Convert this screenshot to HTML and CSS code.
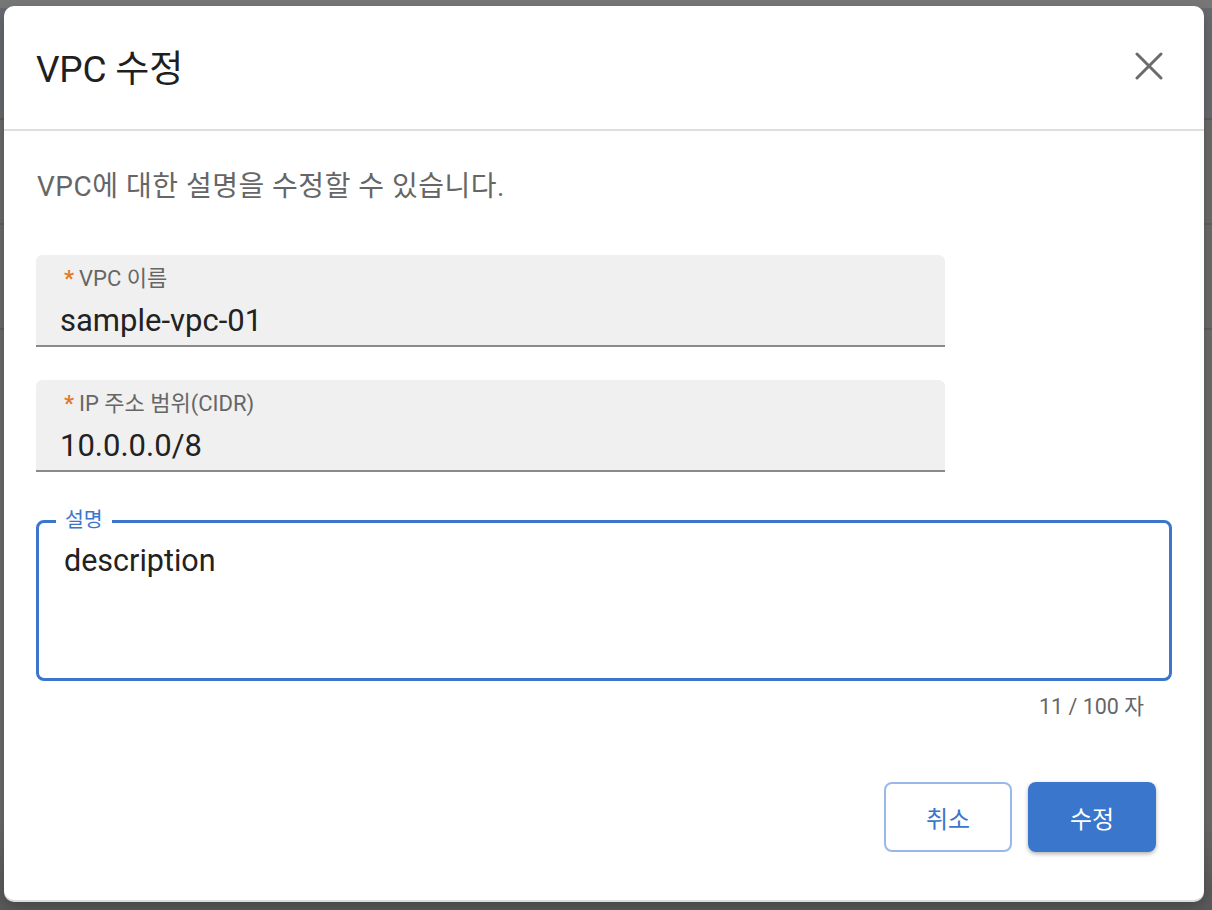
FILE: index.html
```html
<!DOCTYPE html>
<html lang="ko">
<head>
<meta charset="utf-8">
<title>VPC 수정</title>
<link rel="stylesheet" href="styles.css">
</head>
<body>
<div class="backdrop">
  <div class="bg-strip"></div>
  <div class="bg-head"></div>
  <div class="bg-row"></div>
  <div class="bg-row"></div>
  <div class="bg-rest"></div>
</div>

<div class="modal" role="dialog" aria-labelledby="modal-title">
  <header class="modal-header">
    <h1 id="modal-title" class="modal-title">VPC 수정</h1>
    <button class="close-btn" aria-label="닫기">
      <svg width="28" height="28" viewBox="0 0 28 28"><path d="M2 2 L26 26 M26 2 L2 26" stroke="#6b6b6b" stroke-width="3" stroke-linecap="round" fill="none"/></svg>
    </button>
  </header>
  <div class="modal-body">
    <p class="modal-desc">VPC에 대한 설명을 수정할 수 있습니다.</p>

    <div class="filled-field">
      <div class="field-label"><span class="req">*</span>VPC 이름</div>
      <div class="field-value">sample-vpc-01</div>
    </div>

    <div class="filled-field gap-field">
      <div class="field-label"><span class="req">*</span>IP 주소 범위(CIDR)</div>
      <div class="field-value">10.0.0.0/8</div>
    </div>

    <div class="outlined-field">
      <span class="outlined-label">설명</span>
      <div class="outlined-value">description</div>
    </div>
    <div class="counter">11 / 100 자</div>

    <div class="actions">
      <button class="btn btn-outline">취소</button>
      <button class="btn btn-primary">수정</button>
    </div>
  </div>
</div>
</body>
</html>
```

FILE: styles.css
```css
* { box-sizing: border-box; }
html, body {
  margin: 0;
  padding: 0;
  width: 1212px;
  height: 910px;
  overflow: hidden;
}
body {
  background: #6b6b6b;
  font-family: "Roboto", "Noto Sans CJK KR", sans-serif;
  position: relative;
}
.backdrop {
  display: flex;
  flex-direction: column;
  height: 910px;
}
.bg-strip { height: 8px; background: #777777; }
.bg-head { height: 112px; background: #676b70; border-bottom: 2px solid #5e5e5e; }
.bg-row { height: 105px; background: #6b6b6b; border-bottom: 2px solid #5f5f5f; }
.bg-rest { flex: 1; background: linear-gradient(#6b6b6b 85%, #5a5a5a 97%); }

.modal {
  position: absolute;
  left: 4px;
  top: 6px;
  width: 1200px;
  height: 894px;
  background: #fff;
  border-radius: 10px;
  box-shadow: 0 2px 0 #dcdcdc, 0 6px 14px rgba(0,0,0,0.25);
  display: flex;
  flex-direction: column;
}
.modal-header {
  height: 125px;
  border-bottom: 2px solid #dedede;
  display: flex;
  align-items: center;
  justify-content: space-between;
  padding: 0 41px 4px 32px;
}
.modal-title {
  margin: 0;
  font-size: 37px;
  font-weight: 400;
  color: #1f1f1f;
  letter-spacing: -0.2px;
}
.close-btn {
  background: none;
  border: 0;
  padding: 0;
  width: 28px;
  height: 28px;
  display: flex;
  cursor: pointer;
}
.modal-body {
  padding: 0 32px 0 32px;
  display: flex;
  flex-direction: column;
}
.modal-desc {
  margin: 39px 0 0 1px;
  font-size: 28px;
  line-height: 34px;
  letter-spacing: 0.5px;
  color: #666;
}
.filled-field {
  margin-top: 51px;
  width: 909px;
  height: 92px;
  background: #f0f0f0;
  border-radius: 6px 6px 0 0;
  border-bottom: 2px solid #8a8a8a;
  padding: 11px 24px 0 24px;
}
.gap-field { margin-top: 33px; }
.field-label {
  font-size: 22px;
  line-height: 26px;
  color: #666;
  display: flex;
  align-items: center;
}
.req {
  color: #e07a2a;
  font-weight: 700;
  margin: 0 5px 0 4px;
  font-size: 22px;
}
.field-value {
  margin-top: 10px;
  font-size: 31px;
  line-height: 38px;
  color: #222;
}
.outlined-field {
  position: relative;
  margin-top: 48px;
  width: 1136px;
  height: 161px;
  border: 3px solid #3b76cc;
  border-radius: 8px;
  padding: 19px 25px 0 25px;
}
.outlined-label {
  position: absolute;
  left: 17px;
  top: -15px;
  background: #fff;
  padding: 0 9px;
  font-size: 20.5px;
  line-height: 24px;
  color: #3b76cc;
}
.outlined-value {
  font-size: 30.5px;
  line-height: 38px;
  color: #222;
}
.counter {
  width: 1136px;
  text-align: right;
  padding-right: 28px;
  margin-top: 13px;
  font-size: 21.5px;
  line-height: 26px;
  color: #666;
}
.actions {
  display: flex;
  justify-content: flex-end;
  gap: 16px;
  margin-top: 62px;
  padding-right: 16px;
}
.btn {
  width: 128px;
  height: 70px;
  border-radius: 8px;
  font-family: "Roboto", "Noto Sans CJK KR", sans-serif;
  font-size: 24px;
  cursor: pointer;
}
.btn-outline {
  background: #fff;
  border: 2px solid #98b9e8;
  color: #3b76cc;
}
.btn-primary {
  background: #3a76cc;
  border: 0;
  color: #fff;
  box-shadow: 0 2px 4px rgba(0,0,0,0.3);
}
```
